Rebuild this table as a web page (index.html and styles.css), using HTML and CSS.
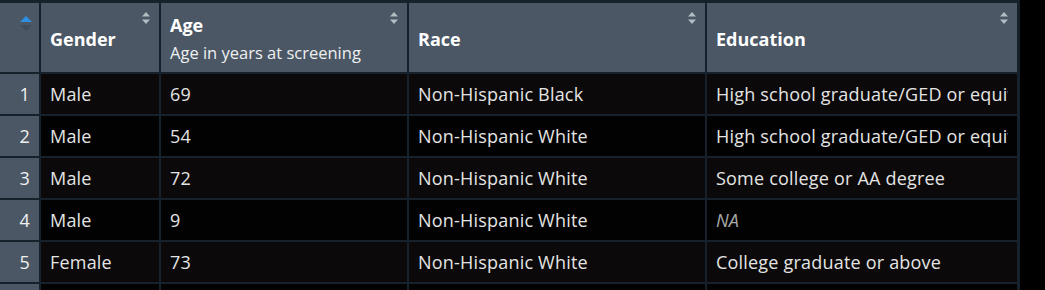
FILE: index.html
```html
<!DOCTYPE html>
<html>
<head>
<meta charset="utf-8">
<link rel="stylesheet" href="styles.css">
</head>
<body>
<div class="page">
  <div class="grid">
    <div class="hcell idx">
      <svg class="sort-main" width="12" height="16" viewBox="0 0 12 16"><path d="M0 6 L6 0 L12 6 Z" fill="#2f8fe0"/><path d="M0 9 L6 15 L12 9 Z" fill="#404c58"/></svg>
    </div>
    <div class="hcell"><span class="title">Gender</span><svg class="sort" viewBox="0 0 10 14"><path d="M1 5.5 L5 1 L9 5.5 Z M1 8.5 L5 13 L9 8.5 Z" fill="#b4bcc4"/></svg></div>
    <div class="hcell"><span class="title">Age</span><span class="sub">Age in years at screening</span><svg class="sort" viewBox="0 0 10 14"><path d="M1 5.5 L5 1 L9 5.5 Z M1 8.5 L5 13 L9 8.5 Z" fill="#b4bcc4"/></svg></div>
    <div class="hcell"><span class="title">Race</span><svg class="sort" viewBox="0 0 10 14"><path d="M1 5.5 L5 1 L9 5.5 Z M1 8.5 L5 13 L9 8.5 Z" fill="#b4bcc4"/></svg></div>
    <div class="hcell"><span class="title">Education</span><svg class="sort" viewBox="0 0 10 14"><path d="M1 5.5 L5 1 L9 5.5 Z M1 8.5 L5 13 L9 8.5 Z" fill="#b4bcc4"/></svg></div>

    <div class="cell idx">1</div><div class="cell odd"><span class="txt">Male</span></div><div class="cell odd"><span class="txt">69</span></div><div class="cell odd"><span class="txt">Non-Hispanic Black</span></div><div class="cell odd"><span class="txt">High school graduate/GED or equivalent</span></div>
    <div class="cell idx">2</div><div class="cell even"><span class="txt">Male</span></div><div class="cell even"><span class="txt">54</span></div><div class="cell even"><span class="txt">Non-Hispanic White</span></div><div class="cell even"><span class="txt">High school graduate/GED or equivalent</span></div>
    <div class="cell idx">3</div><div class="cell odd"><span class="txt">Male</span></div><div class="cell odd"><span class="txt">72</span></div><div class="cell odd"><span class="txt">Non-Hispanic White</span></div><div class="cell odd"><span class="txt">Some college or AA degree</span></div>
    <div class="cell idx">4</div><div class="cell even"><span class="txt">Male</span></div><div class="cell even"><span class="txt">9</span></div><div class="cell even"><span class="txt">Non-Hispanic White</span></div><div class="cell even"><span class="txt na">NA</span></div>
    <div class="cell idx">5</div><div class="cell odd"><span class="txt">Female</span></div><div class="cell odd"><span class="txt">73</span></div><div class="cell odd"><span class="txt">Non-Hispanic White</span></div><div class="cell odd"><span class="txt">College graduate or above</span></div>
    <div class="cell idx"></div><div class="cell even"></div><div class="cell even"></div><div class="cell even"></div><div class="cell even"></div>
  </div>
</div>
</body>
</html>
```

FILE: styles.css
```css
html, body {
  margin: 0;
  padding: 0;
  background: #000;
  overflow: hidden;
}
.page {
  width: 1045px;
  height: 290px;
  overflow: hidden;
  background: #000;
  font-family: "Open Sans", "Noto Sans", sans-serif;
  color: #e4e4e4;
}
.grid {
  width: 1020px;
  display: grid;
  grid-template-columns: 39px 118px 246px 296px 310px;
  grid-template-rows: 69px repeat(6, 40px);
  column-gap: 2px;
  row-gap: 2px;
  padding: 3px 2px 0 0;
  background: #17212c;
  box-sizing: border-box;
}
.hcell {
  position: relative;
  background: #4b5764;
  display: flex;
  flex-direction: column;
  justify-content: center;
  padding: 2px 9px 0;
  color: #ffffff;
}
.title {
  font-weight: 700;
  font-size: 18px;
  line-height: 24px;
}
.sub {
  font-size: 16.5px;
  line-height: 22px;
  color: #eef0f2;
  margin-top: 5px;
}
.sort {
  position: absolute;
  right: 8px;
  top: 8px;
  width: 10px;
  height: 14px;
}
.sort-main {
  position: absolute;
  left: 20px;
  top: 13px;
}
.cell {
  display: flex;
  align-items: center;
  padding: 0 9px;
  font-size: 18px;
  letter-spacing: 0.2px;
  white-space: nowrap;
  min-width: 0;
}
.txt {
  display: block;
  overflow: hidden;
  width: 100%;
}
.cell.idx {
  background: #4b5764;
  justify-content: flex-end;
  padding: 0 9px 0 0;
  color: #f0f0f0;
}
.odd { background: #0b0909; }
.even { background: #020202; }
.na {
  font-style: italic;
  color: #a9a9a9;
}
```
